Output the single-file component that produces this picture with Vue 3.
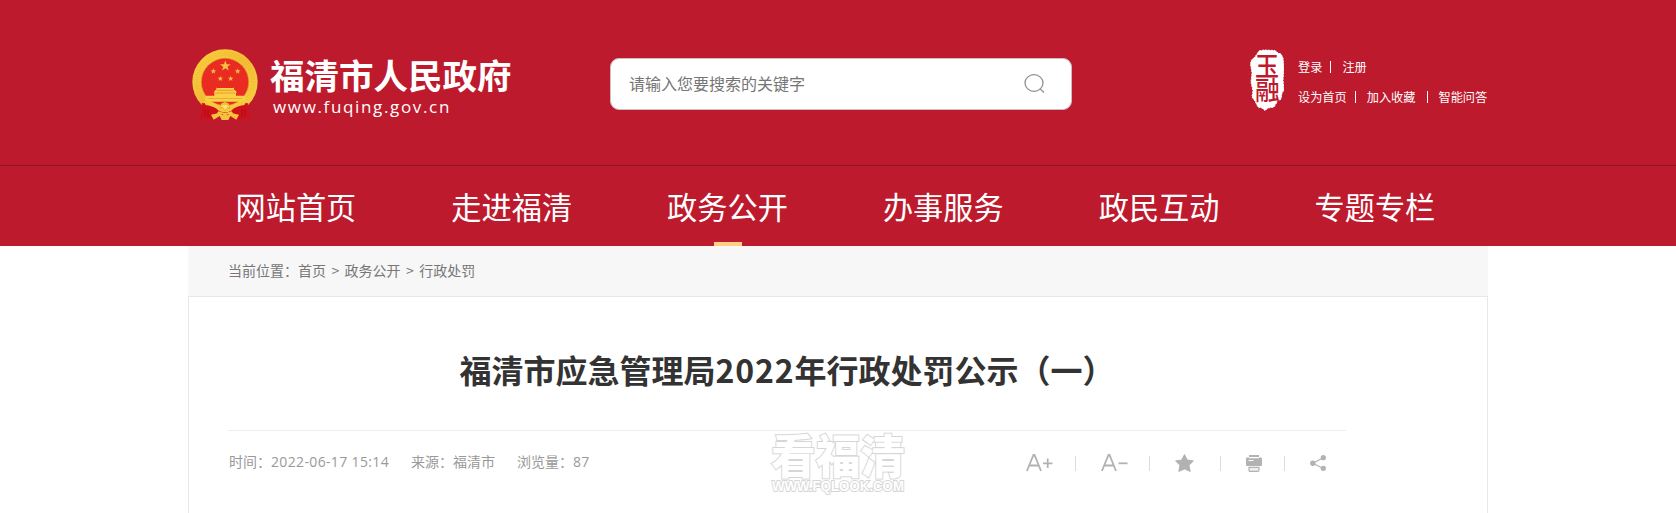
<template>
  <div class="page">
    <header class="header">
      <div class="header-top">
        <a class="logo">
          <svg class="emblem" viewBox="21 6 198 222">
            <defs>
              <linearGradient id="gold" x1="0" y1="0" x2="1" y2="1">
                <stop offset="0" stop-color="#fbd23f" />
                <stop offset="0.5" stop-color="#f3bd35" />
                <stop offset="1" stop-color="#fbd548" />
              </linearGradient>
            </defs>
            <path d="M48 160 L70 176 L84 200 L90 225 L70 217 L45 218 L50 196 Z" fill="#d0101b" />
            <path d="M192 160 L170 176 L156 200 L150 225 L170 217 L195 218 L190 196 Z" fill="#d0101b" />
            <circle cx="120" cy="108" r="98" fill="url(#gold)" />
            <circle cx="120" cy="108" r="85" fill="none" stroke="#dda02b" stroke-width="14" stroke-dasharray="2 5" opacity="0.3" />
            <circle cx="120" cy="108" r="71" fill="#e92b22" stroke="#d79426" stroke-width="2" />
            <path v-for="(star, i) in stars" :key="i" :d="starPath(star)" fill="#f6bf45" />
            <path d="M94 125 L98 126 H143 L147 125 V132 H150 L156 140 H153 V149 H180 V156 H62 V149 H88 V140 H86 L91 132 H94 Z" fill="#fbd047" />
            <path d="M57 157 H184 L178 167 H64 Z" fill="#f7d243" />
            <path d="M96 133 H146 M91 141 H151" stroke="#d9822a" stroke-width="2" />
            <path d="M50 172 Q84 168 104 183 L110 172 L120 168 L130 172 L136 183 Q156 168 190 172 L186 190 Q152 184 139 196 Q120 204 101 196 Q88 184 54 190 Z" fill="#d0101b" />
            <path d="M56 166 Q84 166 104 181 L110 172 L120 168 L130 172 L136 181 Q156 166 184 166 L178 177 Q152 180 139 194 Q120 203 101 194 Q88 180 62 177 Z" fill="#f7c93e" />
            <path d="M54 184 Q88 180 101 195 L94 204 L76 206 L90 225 L70 217 L47 217 Z" fill="#d0101b" />
            <path d="M186 184 Q152 180 139 195 L146 204 L164 206 L150 225 L170 217 L193 217 Z" fill="#d0101b" />
            <path d="M60 190 V212 M69 190 V214 M180 190 V212 M171 190 V214" stroke="#9c101b" stroke-width="3" />
            <path d="M78 206 L104 200 L112 208 L120 202 L128 208 L136 200 L162 206 L154 221 L136 210 L130 222 H110 L104 210 L86 221 Z" fill="#f5c33b" />
            <path d="M105 188 Q108 174 120 174 Q132 174 135 188 L128 184 L120 194 L112 184 Z" fill="#fde16a" stroke="#dc9d2b" stroke-width="2" />
          </svg>
          <span class="logo-text">
            <strong class="logo-name">福清市人民政府</strong>
            <span class="logo-url">www.fuqing.gov.cn</span>
          </span>
        </a>

        <form class="search" @submit.prevent>
          <input v-model="keyword" class="search-input" type="text" placeholder="请输入您要搜索的关键字">
          <button class="search-btn" type="submit" aria-label="搜索">
            <svg width="22" height="20" viewBox="0 0 22 20" fill="none" stroke="#8f8f8f" stroke-width="1.3">
              <ellipse cx="10" cy="9" rx="9" ry="8.3" />
              <path d="M16 14.6 L20 18.5" />
            </svg>
          </button>
        </form>

        <div class="user">
          <svg class="seal" viewBox="0 0 34 62">
            <path d="M9 2 L14 1 L25 1.5 L28 4 L31 5 L33 9 L34 19 L33 31 L34 41 L32 44 L31 50 L27 53 L24 58 L18 59 L15 61.5 L12 59 L8 58 L5 52 L2 48 L3 42 L1 33 L2 24 L0.5 15 L1.5 11 L5 8 Z" fill="#fff" stroke="#fff" stroke-width="1" stroke-dasharray="2 1" />
            <text x="5" y="27" textLength="24" lengthAdjust="spacingAndGlyphs" class="seal-text">玉</text>
            <text x="5" y="51" textLength="25" lengthAdjust="spacingAndGlyphs" class="seal-text">融</text>
          </svg>
          <div class="user-links">
            <div class="link-row">
              <a>登录</a><i class="bar first"></i><a>注册</a>
            </div>
            <div class="link-row">
              <a>设为首页</a><i class="bar first"></i><a>加入收藏</a><i class="bar"></i><a>智能问答</a>
            </div>
          </div>
        </div>
      </div>

      <nav class="nav">
        <ul class="nav-list">
          <li v-for="item in navs" :key="item" class="nav-item" :class="{ active: item === current }">{{ item }}</li>
        </ul>
      </nav>
    </header>

    <main class="main">
      <div class="crumbs">
        <span>当前位置：</span><a>首页</a><span class="gt">&gt;</span><a>政务公开</a><span class="gt">&gt;</span><a>行政处罚</a>
      </div>

      <article class="article">
        <h1 class="article-title">福清市应急管理局<span class="year">2022</span>年行政处罚公示（一）</h1>
        <div class="article-meta">
          <div class="meta-info">
            <span class="meta-time">时间：<span class="num">2022-06-17 15:14</span></span>
            <span class="meta-source">来源：福清市</span>
            <span>浏览量：<span class="num">87</span></span>
          </div>
          <div class="tools">
            <svg class="tool" width="27" height="18" viewBox="0 0 27 18" fill="none" stroke="#b2b2b2" stroke-width="1.8">
              <path d="M0.9 17 L7.5 0.8 H8.5 L15 17 M3.3 11.5 H12.7" />
              <path d="M17 9.3 H26.5 M21.7 4.5 V14" />
            </svg>
            <i class="sep sep-a"></i>
            <svg class="tool" width="27" height="18" viewBox="0 0 27 18" fill="none" stroke="#b2b2b2" stroke-width="1.8">
              <path d="M0.9 17 L7.5 0.8 H8.5 L15 17 M3.3 11.5 H12.7" />
              <path d="M17.5 9.3 H26.5" />
            </svg>
            <i class="sep sep-b"></i>
            <svg class="tool" width="19" height="18" viewBox="0 0 19 18">
              <path d="M9.5 0.6 L12.3 6 L18.4 6.9 L14 11.2 L15.2 17.4 L9.5 14.9 L3.8 17.4 L5 11.2 L0.6 6.9 L6.7 6 Z" fill="#b2b2b2" stroke="#b2b2b2" stroke-linejoin="round" />
            </svg>
            <i class="sep sep-c"></i>
            <svg class="tool" width="16" height="17" viewBox="0 0 16 17" fill="#b2b2b2">
              <path d="M3 0 H13 V2 H3 Z" />
              <path d="M1 2.6 H3 V3.2 H13 V2.6 H15 Q16 2.6 16 3.6 V10 Q16 11 15 11 H1 Q0 11 0 10 V3.6 Q0 2.6 1 2.6 Z" />
              <path d="M2.5 5.5 H7.5" stroke="#fff" stroke-width="1" />
              <path d="M3 12.4 H13 V15 Q13 16.4 11.8 16.4 H4.2 Q3 16.4 3 15 Z" fill="#eee" stroke="#b2b2b2" stroke-width="1.2" />
            </svg>
            <i class="sep sep-d"></i>
            <svg class="tool" width="16" height="16" viewBox="0 0 16 16" fill="#b2b2b2">
              <path d="M13.4 2.7 L2.8 8.2 L13.4 13.5" fill="none" stroke="#b2b2b2" stroke-width="1.2" />
              <circle cx="2.8" cy="8.2" r="2.7" />
              <circle cx="13.3" cy="2.7" r="2.6" />
              <circle cx="13.3" cy="13.3" r="2.6" />
            </svg>
          </div>
        </div>
      </article>
    </main>

    <svg class="watermark" width="144" height="80" viewBox="0 -14 144 80">
      <text x="4" y="43" textLength="134" lengthAdjust="spacingAndGlyphs" class="mark-name">看福清</text>
      <text x="5" y="61" textLength="132" lengthAdjust="spacingAndGlyphs" class="mark-url">WWW.FQLOOK.COM</text>
    </svg>
  </div>
</template>

<script setup>
import { ref } from 'vue'

const keyword = ref('')
const current = '政务公开'
const navs = ['网站首页', '走进福清', '政务公开', '办事服务', '政民互动', '专题专栏']

const stars = [
  { x: 121, y: 60, r: 17 },
  { x: 85, y: 76, r: 9 },
  { x: 158, y: 76, r: 9 },
  { x: 106, y: 98, r: 9 },
  { x: 137, y: 98, r: 9 }
]

const starPath = ({ x, y, r }) => {
  const points = []
  for (let i = 0; i < 10; i++) {
    const radius = i % 2 ? r * 0.4 : r
    const angle = (Math.PI / 5) * i - Math.PI / 2
    points.push(`${(x + radius * Math.cos(angle)).toFixed(1)} ${(y + radius * Math.sin(angle)).toFixed(1)}`)
  }
  return `M${points.join('L')}Z`
}
</script>

<style>
body {
  background: #fff;
}
</style>

<style scoped>
.page {
  position: relative;
  height: 513px;
  overflow: hidden;
  font-family: "Noto Sans CJK SC", sans-serif;
}

.header {
  background: #bd1a2d;
  color: #fff;
}

.header-top {
  display: flex;
  box-sizing: border-box;
  width: 1300px;
  height: 165px;
  margin: 0 auto;
  padding-left: 4px;
}

.logo {
  display: flex;
  width: 418px;
  padding-top: 48px;
}

.emblem {
  width: 66px;
  height: 74px;
}

.logo-text {
  display: flex;
  flex-direction: column;
  margin: 7px 0 0 12px;
}

.logo-name {
  font-size: 34.5px;
  line-height: 38px;
  font-weight: 700;
}

.logo-url {
  margin: 3px 0 0 3px;
  font-family: "Open Sans", sans-serif;
  font-size: 17px;
  line-height: 22px;
  letter-spacing: 1.65px;
}

.search {
  display: flex;
  align-items: center;
  box-sizing: border-box;
  width: 462px;
  height: 52px;
  margin-top: 58px;
  padding: 0 25px 0 18px;
  background: #fff;
  border: 1px solid #c9bfc0;
  border-radius: 9px;
}

.search-input {
  flex: 1;
  min-width: 0;
  padding: 0 0 3px;
  border: 0;
  outline: none;
  background: none;
  font: 16px "Noto Sans CJK SC", sans-serif;
}

.search-input::placeholder {
  color: #757575;
}

.search-btn {
  display: flex;
  padding: 0;
  border: 0;
  background: none;
}

.user {
  display: flex;
  margin-left: 178px;
  padding-top: 49px;
}

.seal {
  width: 34px;
  height: 62px;
}

.seal-text {
  font-size: 26px;
  font-weight: 500;
  fill: #bd1a2d;
}

.user-links {
  margin: 3px 0 0 14px;
  font-size: 12.2px;
}

.link-row {
  display: flex;
  align-items: center;
  height: 30px;
}

.bar {
  width: 1px;
  height: 12px;
  margin: 0 11px;
  background: #fff;
}

.bar.first {
  margin: 0 11px 0 8px;
}

.nav {
  border-top: 1px solid #8f1522;
}

.nav-list {
  display: flex;
  width: 1300px;
  height: 80px;
  margin: 0 auto;
  padding: 0;
  list-style: none;
}

.nav-item {
  position: relative;
  width: 215.8px;
  font-size: 30.2px;
  line-height: 81px;
  text-align: center;
}

.nav-item.active::after {
  content: "";
  position: absolute;
  left: 94.5px;
  bottom: 0;
  width: 28px;
  height: 4px;
  background: #ffcf88;
}

.main {
  width: 1300px;
  margin: 0 auto;
}

.crumbs {
  display: flex;
  height: 50px;
  padding-left: 40px;
  background: #f7f7f7;
  color: #767676;
  font-size: 14px;
  line-height: 48px;
}

.gt {
  width: 18.6px;
  text-align: center;
}

.article {
  box-sizing: border-box;
  height: 300px;
  padding: 0 141px 0 39px;
  border: 1px solid #e8e8e8;
}

.article-title {
  height: 133px;
  margin: 0;
  border-bottom: 1px solid #eee;
  color: #333;
  font-size: 32px;
  line-height: 144px;
  font-weight: 700;
  text-align: center;
  white-space: nowrap;
}

.year {
  letter-spacing: 0.9px;
}

.article-meta {
  display: flex;
  justify-content: space-between;
  padding-right: 20px;
}

.meta-info {
  display: flex;
  padding-left: 1px;
  color: #999;
  font-size: 14px;
  line-height: 60px;
  white-space: nowrap;
}

.num {
  font-family: "Open Sans", sans-serif;
  letter-spacing: 0.35px;
}

.meta-time {
  width: 182px;
}

.meta-source {
  width: 106px;
}

.tools {
  display: flex;
  align-items: center;
  height: 64px;
}

.sep {
  width: 1px;
  height: 15px;
  background: #dcdcdc;
}

.sep-a {
  margin: 0 25px 0 22px;
}

.sep-b {
  margin: 0 25px 0 21px;
}

.sep-c {
  margin: 0 25px 0 26px;
}

.sep-d {
  margin: 0 25px 0 22px;
}

.watermark {
  position: absolute;
  left: 767px;
  top: 416px;
  fill: #fff;
  stroke: #d6d6d6;
  stroke-width: 2px;
  paint-order: stroke;
}

.mark-name {
  font-size: 46px;
  font-weight: 900;
}

.mark-url {
  font-family: "Liberation Sans", Arial, sans-serif;
  font-size: 15px;
  font-weight: 700;
}
</style>
